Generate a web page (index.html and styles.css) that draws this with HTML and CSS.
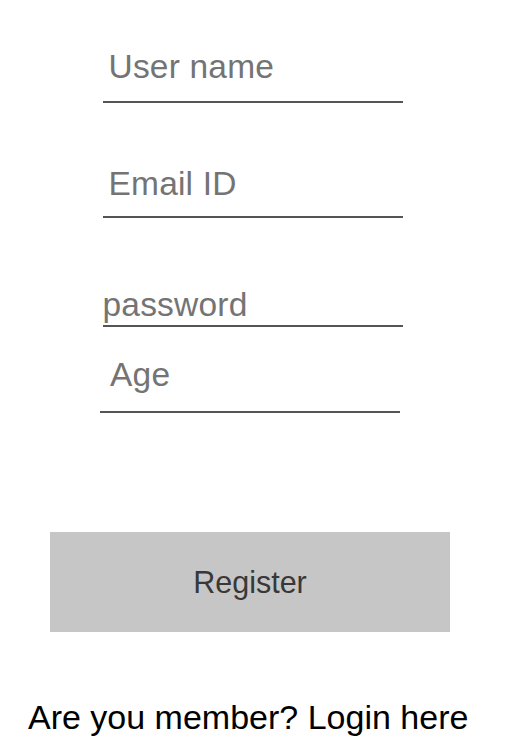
FILE: index.html
```html
<!DOCTYPE html>
<html lang="en">
<head>
<meta charset="utf-8">
<title>Register</title>
<link rel="stylesheet" href="styles.css">
</head>
<body>
<form class="form">
  <input class="field field-user" type="text" placeholder="User name">
  <input class="field field-email" type="email" placeholder="Email ID">
  <input class="field field-password" type="password" placeholder="password">
  <input class="field field-age" type="text" placeholder="Age">
  <button class="register" type="button">Register</button>
  <p class="login">Are you member? Login here</p>
</form>
</body>
</html>
```

FILE: styles.css
```css
html, body {
  margin: 0;
  padding: 0;
  background: #ffffff;
}

.form {
  display: flex;
  flex-direction: column;
  align-items: center;
  padding-top: 48px;
  margin: 0;
}

.field {
  display: block;
  box-sizing: content-box;
  width: 294px;
  height: 38px;
  margin: 0;
  padding: 0 0 0 6px;
  border: none;
  border-bottom: 2px solid #555555;
  border-radius: 0;
  background: transparent;
  outline: none;
  font-family: "Liberation Sans", Arial, sans-serif;
  font-size: 33.5px;
  line-height: 38px;
  letter-spacing: 0.2px;
  color: #333333;
}

.field::placeholder {
  color: #747474;
  opacity: 1;
}

.field-user {
  padding-bottom: 15px;
}

.field-email {
  margin-top: 62px;
  padding-bottom: 13px;
}

.field-password {
  margin-top: 68px;
  padding-left: 0;
  width: 300px;
  padding-bottom: 1px;
}

.field-age {
  margin-top: 29px;
  margin-right: 5px;
  padding-left: 10px;
  width: 290px;
  padding-bottom: 17px;
}

.register {
  align-self: flex-start;
  margin: 119px 0 0 50px;
  width: 400px;
  height: 100px;
  border: none;
  border-radius: 0;
  background: #c6c6c6;
  color: #383838;
  font-family: "Liberation Sans", Arial, sans-serif;
  font-size: 30.5px;
  padding: 0;
  display: flex;
  align-items: center;
  justify-content: center;
}

.login {
  align-self: flex-start;
  margin: 65px 0 0 28px;
  font-family: "Liberation Sans", Arial, sans-serif;
  font-size: 34px;
  line-height: 40px;
  color: #000000;
  white-space: nowrap;
}
```
